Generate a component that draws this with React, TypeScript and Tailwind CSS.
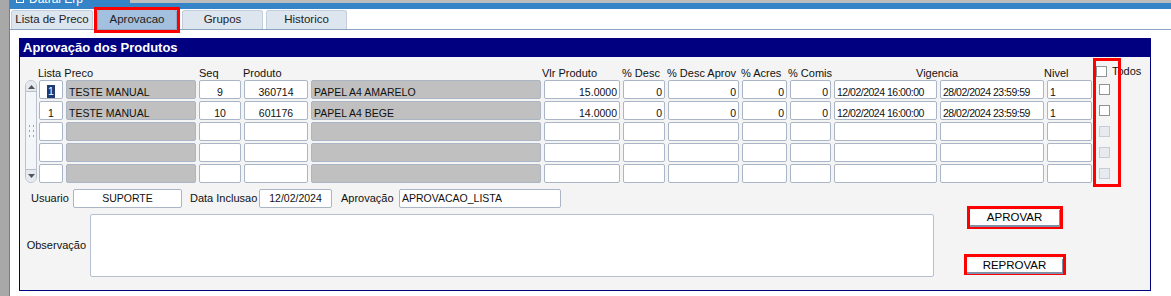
import clsx from "clsx";

type Col = {
  key: string;
  w: string;
  align?: "left" | "center" | "right";
  gray?: boolean;
  date?: boolean;
};

const cols: Col[] = [
  { key: "lista", w: "w-[24px]", align: "center" },
  { key: "preco", w: "w-[130px]", gray: true },
  { key: "seq", w: "w-[42px]", align: "center" },
  { key: "produto", w: "w-[64px]", align: "center" },
  { key: "desc", w: "w-[230px]", gray: true },
  { key: "vlr", w: "w-[76px]", align: "right" },
  { key: "pd", w: "w-[42px]", align: "right" },
  { key: "pda", w: "w-[71px]", align: "right" },
  { key: "pa", w: "w-[45px]", align: "right" },
  { key: "pc", w: "w-[41px]", align: "right" },
  { key: "v1", w: "w-[103px]", date: true },
  { key: "v2", w: "w-[104px]", date: true },
  { key: "nivel", w: "w-[45px]" },
];

type Row = Record<string, string>;

const rows: Row[] = [
  {
    lista: "1",
    preco: "TESTE MANUAL",
    seq: "9",
    produto: "360714",
    desc: "PAPEL A4 AMARELO",
    vlr: "15.0000",
    pd: "0",
    pda: "0",
    pa: "0",
    pc: "0",
    v1: "12/02/2024 16:00:00",
    v2: "28/02/2024 23:59:59",
    nivel: "1",
  },
  {
    lista: "1",
    preco: "TESTE MANUAL",
    seq: "10",
    produto: "601176",
    desc: "PAPEL A4 BEGE",
    vlr: "14.0000",
    pd: "0",
    pda: "0",
    pa: "0",
    pc: "0",
    v1: "12/02/2024 16:00:00",
    v2: "28/02/2024 23:59:59",
    nivel: "1",
  },
  {},
  {},
  {},
];

function Check({ disabled }: { disabled?: boolean }) {
  return (
    <div
      className={clsx(
        "w-[11px] h-[11px] shrink-0 border",
        disabled ? "bg-[#e7ebf0] border-[#c6cdd6]" : "bg-white border-[#929292]"
      )}
    />
  );
}

function Tab({ label, active, className }: { label: string; active?: boolean; className?: string }) {
  return (
    <div
      className={clsx(
        "relative shrink-0 flex items-center justify-center rounded-t-[3px] border border-b-0 text-[11.5px] text-[#222]",
        active ? "h-[20px] bg-[#a3c0de] border-[#8eaacb]" : "h-[19px] bg-[#dde5ee] border-[#c2cedb]",
        className
      )}
    >
      {label}
      {active && (
        <span className="absolute -left-[4px] -top-[3px] w-[86px] h-[26px] border-[3px] border-[#ff0000]" />
      )}
    </div>
  );
}

function Cell({ col, value, selected }: { col: Col; value?: string; selected?: boolean }) {
  return (
    <div
      className={clsx(
        "h-[19px] shrink-0 border border-[#aab6c6] rounded-[2px] flex items-end px-[2px] leading-[12px] overflow-hidden whitespace-nowrap text-[10.5px]",
        col.w,
        col.gray ? "bg-[#c0c0c0]" : "bg-white",
        col.align === "right" && "justify-end",
        col.align === "center" && "justify-center",
        col.date && "tracking-[-0.5px]"
      )}
    >
      {selected ? (
        <span className="inline-block bg-[#1f3b73] text-white px-[1px] h-[13px] leading-[13px]">{value}</span>
      ) : (
        value
      )}
    </div>
  );
}

function Scroller() {
  return (
    <div className="w-[12px] h-[103px] shrink-0 rounded-[6px] border border-[#b9c3d0] bg-[#f3f5f8] flex flex-col justify-between overflow-hidden">
      <div className="h-[11px] border-b border-[#b5bfcc] bg-[#e6eaf0] flex items-end justify-center pb-[2px]">
        <svg width="7" height="4" viewBox="0 0 7 4">
          <path d="M0 4 L3.5 0 L7 4 Z" fill="#555" />
        </svg>
      </div>
      <div className="flex flex-col items-center gap-[3px]">
        <div className="flex gap-[3px]">
          <span className="w-[1px] h-[2px] bg-[#9aa3ae]" />
          <span className="w-[1px] h-[2px] bg-[#9aa3ae]" />
        </div>
        <div className="flex gap-[3px]">
          <span className="w-[1px] h-[2px] bg-[#9aa3ae]" />
          <span className="w-[1px] h-[2px] bg-[#9aa3ae]" />
        </div>
        <div className="flex gap-[3px]">
          <span className="w-[1px] h-[2px] bg-[#9aa3ae]" />
          <span className="w-[1px] h-[2px] bg-[#9aa3ae]" />
        </div>
      </div>
      <div className="h-[13px] border-t border-[#b5bfcc] bg-[#e6eaf0] flex items-start justify-center pt-[4px]">
        <svg width="7" height="4" viewBox="0 0 7 4">
          <path d="M0 0 L3.5 4 L7 0 Z" fill="#555" />
        </svg>
      </div>
    </div>
  );
}

function Field({ w, children, center }: { w: string; children?: string; center?: boolean }) {
  return (
    <div
      className={clsx(
        "h-[19px] shrink-0 border border-[#aab6c6] rounded-[2px] bg-white flex items-center px-[2px] text-[10.5px] whitespace-nowrap",
        w,
        center && "justify-center"
      )}
    >
      {children}
    </div>
  );
}

function Panel() {
  return (
    <div className="w-[1132px] h-[253px] flex flex-col">
      <div className="h-[19px] shrink-0 bg-[#000080] text-white font-bold text-[13px] leading-[19px] pl-[4px]">
        Aprovação dos Produtos
      </div>
      <div className="relative flex-1 bg-[#f4f4f4] border-x border-b border-[#000080] pt-[5px] text-[11px]">
        {/* cabecalho */}
        <div className="h-[18px] flex items-end gap-[3px] pl-[19px] leading-[13px] whitespace-nowrap">
          <div className="w-[157px] shrink-0 -ml-[1px]">Lista Preco</div>
          <div className="w-[42px] shrink-0 ml-[1px]">Seq</div>
          <div className="w-[64px] shrink-0 -ml-[1px]">Produto</div>
          <div className="w-[230px] shrink-0" />
          <div className="w-[76px] shrink-0 -ml-[1px]">Vlr Produto</div>
          <div className="w-[42px] shrink-0 ml-[1px]">% Desc</div>
          <div className="w-[71px] shrink-0">% Desc Aprov</div>
          <div className="w-[45px] shrink-0">% Acres</div>
          <div className="w-[41px] shrink-0 -ml-[1px]">% Comis</div>
          <div className="w-[210px] shrink-0 text-center">Vigencia</div>
          <div className="w-[45px] shrink-0 -ml-[1px]">Nivel</div>
          <div className="ml-[4px] self-center">
            <Check />
          </div>
          <div className="ml-[2px] self-start mt-[3px]">Todos</div>
        </div>

        {/* linhas */}
        <div className="flex pl-[5px]">
          <Scroller />
          <div className="ml-[2px] flex flex-col gap-[2px]">
            {rows.map((row, i) => (
              <div key={i} className="flex items-center gap-[3px]">
                {cols.map((col) => (
                  <Cell key={col.key} col={col} value={row[col.key]} selected={i === 0 && col.key === "lista"} />
                ))}
                <div className="ml-[4px]">
                  <Check disabled={!row.lista} />
                </div>
              </div>
            ))}
          </div>
        </div>

        {/* rodape */}
        <div className="flex mt-[6px]">
          <div className="w-[914px] shrink-0 flex flex-col">
            <div className="flex items-center pl-[11px]">
              <span className="w-[42px] shrink-0">Usuario</span>
              <Field w="w-[109px]" center>
                SUPORTE
              </Field>
              <span className="w-[69px] shrink-0 ml-[8px]">Data Inclusao</span>
              <Field w="w-[73px]" center>
                12/02/2024
              </Field>
              <span className="w-[58px] shrink-0 ml-[9px]">Aprovação</span>
              <Field w="w-[162px]">APROVACAO_LISTA</Field>
            </div>
            <div className="flex items-center mt-[6px]">
              <span className="w-[70px] shrink-0 text-right pr-[4px]">Observação</span>
              <div className="w-[844px] h-[63px] bg-white border border-[#b4c0cf] rounded-[2px]" />
            </div>
          </div>
          <div className="w-[162px] shrink-0 flex flex-col items-center pt-[17px]">
            <div className="w-[96px] h-[23px] border-[3px] border-[#ff0000]">
              <button className="w-full h-full bg-white border-b-2 border-r border-[#7f91aa] text-[11.5px] leading-[15px] text-black">
                APROVAR
              </button>
            </div>
            <div className="w-[102px] h-[21px] border-[3px] border-[#ff0000] mt-[25px]">
              <button className="w-full h-full bg-white border-b-2 border-r border-[#7f91aa] text-[11.5px] leading-[13px] text-black">
                REPROVAR
              </button>
            </div>
          </div>
        </div>

        <span className="absolute left-[1073px] top-[1px] w-[28px] h-[129px] border-[3px] border-[#ff0000] pointer-events-none" />
      </div>
    </div>
  );
}

export default function App() {
  return (
    <div className="w-[1171px] h-[296px] overflow-hidden bg-white flex font-['Liberation_Sans',Arial,sans-serif] text-[#111]">
      <div className="w-[10px] shrink-0 bg-[#a8a8a8] border-r border-[#7c7c7c]" />
      <div className="flex-1 flex flex-col min-w-0">
        <div className="h-[9px] shrink-0 flex">
          <div className="w-[120px] bg-[#3584c7] overflow-hidden text-white text-[12px] leading-[14px] pl-[6px] whitespace-nowrap">
            <div className="-mt-[8px] flex items-center gap-[5px]">
              <span className="w-[8px] h-[8px] border border-white" />
              Datrai Erp
            </div>
          </div>
          <div className="flex-1 flex flex-col">
            <div className="h-[3px] bg-[#bdbdbd]" />
            <div className="flex-1 bg-[#3584c7]" />
          </div>
        </div>
        <div className="h-[21px] shrink-0 flex items-end border-b border-[#8aa4c2] bg-white">
          <Tab label="Lista de Preco" className="ml-[1px] w-[82px]" />
          <Tab label="Aprovacao" active className="ml-[4px] w-[80px]" />
          <Tab label="Grupos" className="ml-[5px] w-[81px]" />
          <Tab label="Historico" className="ml-[3px] w-[81px]" />
        </div>
        <div className="flex-1 pl-[9px] pt-[8px] bg-white">
          <Panel />
        </div>
      </div>
    </div>
  );
}
